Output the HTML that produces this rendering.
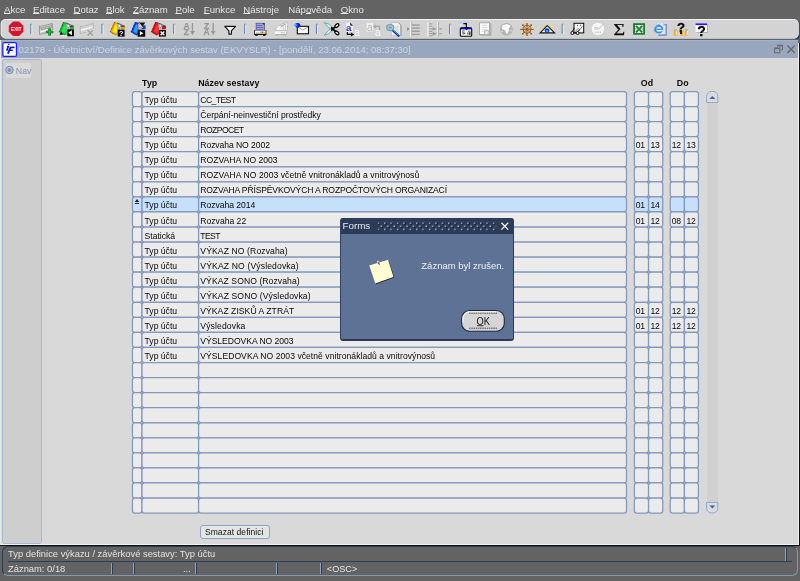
<!DOCTYPE html>
<html><head><meta charset="utf-8"><title>Forms</title>
<style>
*{box-sizing:border-box;margin:0;padding:0}
html,body{width:800px;height:581px;overflow:hidden;background:#636363;font-family:"Liberation Sans",sans-serif}
#root{position:relative;width:800px;height:581px;overflow:hidden;will-change:transform}
.abs{position:absolute}
/* menu */
#menu span{position:absolute;top:2.9px;font-size:9.6px;line-height:13px;color:#e6e6e6;white-space:nowrap}
#menu u{text-decoration:underline;text-underline-offset:0.4px;text-decoration-thickness:1px}
/* toolbar */
#tb{position:absolute;left:1px;top:19px;width:797px;height:20.5px;background:#d3d3d3;border-radius:9px 9px 9px 9px / 10px 10px 10px 10px;border-top:1px solid #eeeeee}
.sep{position:absolute;top:26px;width:1.6px;height:9px;background:#7f9ac4;border-radius:1px}
/* title bar */
#title{position:absolute;left:1px;top:41px;width:797px;height:17px;background:#98a7be}
#title .t{position:absolute;left:17.6px;top:3px;font-size:9.6px;line-height:12px;color:#cdd4df;white-space:nowrap;letter-spacing:-0.04px}
/* content */
#content{position:absolute;left:1px;top:58px;width:797px;height:486px;background:#d9d9d9}
#leftp{position:absolute;left:2px;top:59px;width:40px;height:485px;background:#cecece;border:1px solid #a9b8cf;border-radius:2.5px}
/* fields */
.f{position:absolute;border:1px solid transparent;font-size:8.6px;line-height:14.6px;padding-top:1px;color:#080808;white-space:nowrap;overflow:hidden;padding-left:2px}
.f.typ{padding-left:2.6px}
.f.nam{padding-left:1.3px}
.f.n{padding-left:0.7px;letter-spacing:-0.1px}
.f.n2{padding-left:1.4px}
.hdr{position:absolute;font-weight:bold;font-size:8.8px;letter-spacing:0.08px;line-height:12px;color:#0a0a0a;white-space:nowrap}
/* dialog */
#dlg{position:absolute;left:340px;top:218px;width:173.5px;height:122.6px;background:#5d7295;border-radius:3px 3px 3px 3px;border-right:1.5px solid #2b3a55;border-bottom:2px solid #2b3a55;border-left:1px solid #33435f;overflow:hidden}
#dlgt{position:absolute;left:0;top:0;width:100%;height:15.7px;background:#2b3b58}
/* status */
#status{position:absolute;left:2px;top:546px;width:796px;height:30px;border:1px solid;border-color:#2c3b57 #8797b0 #8797b0 #2c3b57;border-radius:6px}
.vs{position:absolute;top:563px;width:2px;height:11px;background:#2c3b57;border-left:1px solid #8ea2c2}
.st{position:absolute;font-size:9.4px;line-height:12px;color:#e2e2e2;white-space:nowrap}
</style></head><body>
<div id="root">
<!-- MENU -->
<div id="menu">
<span style="left:4px"><u>A</u>kce</span>
<span style="left:33px"><u>E</u>ditace</span>
<span style="left:73.5px"><u>D</u>otaz</span>
<span style="left:106px"><u>B</u>lok</span>
<span style="left:133px"><u>Z</u>áznam</span>
<span style="left:175.5px"><u>P</u>ole</span>
<span style="left:203.8px"><u>F</u>unkce</span>
<span style="left:243.3px"><u>N</u>ástroje</span>
<span style="left:288.3px">Náp<u>o</u>věda</span>
<span style="left:340.8px"><u>O</u>kno</span>
</div>
<!-- TOOLBAR -->
<svg class="abs" style="left:0;top:18px" width="800" height="24" viewBox="0 18 800 24">
<rect x="0.9" y="19.6" width="798.2" height="19.7" rx="5" fill="#55657f"/><rect x="795" y="20.4" width="4.6" height="18.6" rx="3" fill="#2c3b57"/><rect x="0.6" y="19" width="798.2" height="19.45" rx="5" fill="#f1f1f1"/><rect x="1.5" y="19.9" width="796.9" height="18.55" rx="4.4" fill="#d3d3d3"/>
<polygon points="13.05,21.50 19.05,21.50 23.30,25.75 23.30,31.75 19.05,36.00 13.05,36.00 8.80,31.75 8.80,25.75" fill="#d9112c"/>
<text x="16.1" y="30.5" font-family="Liberation Sans" font-weight="bold" font-size="4.9" fill="#fff" text-anchor="middle">EXIT</text>
<rect x="30.2" y="24" width="1.3" height="10" rx="0.5" fill="#6284c0"/><rect x="31.4" y="24.5" width="0.9" height="9.7" fill="#eaedf2"/><rect x="30.4" y="23.7" width="1.9" height="0.7" fill="#86a0cd"/>
<rect x="101.4" y="24" width="1.3" height="10" rx="0.5" fill="#6284c0"/><rect x="102.60000000000001" y="24.5" width="0.9" height="9.7" fill="#eaedf2"/><rect x="101.60000000000001" y="23.7" width="1.9" height="0.7" fill="#86a0cd"/>
<rect x="173.1" y="24" width="1.3" height="10" rx="0.5" fill="#6284c0"/><rect x="174.29999999999998" y="24.5" width="0.9" height="9.7" fill="#eaedf2"/><rect x="173.29999999999998" y="23.7" width="1.9" height="0.7" fill="#86a0cd"/>
<rect x="244.1" y="24" width="1.3" height="10" rx="0.5" fill="#6284c0"/><rect x="245.29999999999998" y="24.5" width="0.9" height="9.7" fill="#eaedf2"/><rect x="244.29999999999998" y="23.7" width="1.9" height="0.7" fill="#86a0cd"/>
<rect x="315.9" y="24" width="1.3" height="10" rx="0.5" fill="#6284c0"/><rect x="317.09999999999997" y="24.5" width="0.9" height="9.7" fill="#eaedf2"/><rect x="316.09999999999997" y="23.7" width="1.9" height="0.7" fill="#86a0cd"/>
<rect x="449" y="24" width="1.3" height="10" rx="0.5" fill="#6284c0"/><rect x="450.2" y="24.5" width="0.9" height="9.7" fill="#eaedf2"/><rect x="449.2" y="23.7" width="1.9" height="0.7" fill="#86a0cd"/>
<rect x="561.6" y="24" width="1.3" height="10" rx="0.5" fill="#6284c0"/><rect x="562.8000000000001" y="24.5" width="0.9" height="9.7" fill="#eaedf2"/><rect x="561.8000000000001" y="23.7" width="1.9" height="0.7" fill="#86a0cd"/>
<g fill="none" stroke="#8a8a8a" stroke-width="0.8"><path d="M39.5 25.6 V34.6 M39.5 26.6 L52.4 23.6 V30 M39.5 28.6 L52.4 25.4 M39.5 34.4 L46 33 M41 29.8 L52 27"/></g><path d="M40.2 31.4 L47.8 29 L47.8 30.4 L40.2 32.8 Z" fill="#fbfbfb"/><path d="M40.2 33 L45 31.6 V33 L40.2 34.2Z" fill="#bdbdbd"/>
<path d="M48.6 28.7 h1.9 v2.3 h2.3 v1.9 h-2.3 v2.3 h-1.9 v-2.3 h-2.3 v-1.9 h2.3 Z" fill="#00d21e" stroke="#0a6414" stroke-width="0.7"/>
<path d="M63.300000000000004 22.1 L66.3 22.4 L66.9 34.2 L64.9 35.3 L59.2 32 Z" fill="#0cb830"/><path d="M64.2 24.6 L65.8 24.4 L66.2 32.6 L64.4 33.6 L61.400000000000006 31.4 Z" fill="#22e652"/><path d="M63.6 22.2 L59.2 32 L64.9 35.3" stroke="#0a5a1c" stroke-width="0.9" stroke-dasharray="1 0.6" fill="none"/><path d="M66.2 23 L73.2 26.2" stroke="#5c5c5c" stroke-width="1.2" fill="none"/><path d="M70.0 26.8 L73.7 26.2 L73.9 28.9 L69.8 29.6 Z" fill="#0cb830"/><path d="M70.0 26.7 L73.8 26.1" stroke="#2a2a2a" stroke-width="0.9"/><circle cx="68.2" cy="26" r="1.5" fill="#ececec" stroke="#8c8c8c" stroke-width="0.8"/><path d="M68.2 27.4 V30" stroke="#8c8c8c" stroke-width="0.9"/><path d="M59.5 34.8 L61.400000000000006 31.6 L63.0 34.8 Z" fill="#111"/><rect x="61.2" y="35.4" width="6.5" height="1" fill="#f2f2f2"/>
<rect x="67.3" y="29.3" width="6.6" height="7" fill="#050505"/><path d="M68.2 32.8 L71.9 30.3 V35.3 Z" fill="#fff"/>
<g fill="none" stroke="#b4b4b4" stroke-width="0.8"><path d="M80.3 26 V33.5 M80.3 27 L93.4 23.4 V29 M80.3 33.6 L86 32.4"/></g><path d="M80.8 29.6 L92.6 26.2 V27.6 L80.8 31 Z" fill="#f6f6f6"/><path d="M87.6 30.2 L92.8 35.6 M92.8 30.2 L87.6 35.6" stroke="#a4a4a4" stroke-width="1.5" fill="none"/>
<path d="M114.3 22.1 L117.3 22.4 L117.9 34.2 L115.9 35.3 L110.2 32 Z" fill="#eaa000"/><path d="M115.2 24.6 L116.8 24.4 L117.2 32.6 L115.4 33.6 L112.4 31.4 Z" fill="#ffec00"/><path d="M114.60000000000001 22.2 L110.2 32 L115.9 35.3" stroke="#7a4a00" stroke-width="0.9" stroke-dasharray="1 0.6" fill="none"/><path d="M117.2 23 L124.2 26.2" stroke="#5c5c5c" stroke-width="1.2" fill="none"/><path d="M121.0 26.8 L124.7 26.2 L124.9 28.9 L120.8 29.6 Z" fill="#eaa000"/><path d="M121.0 26.7 L124.8 26.1" stroke="#2a2a2a" stroke-width="0.9"/><circle cx="119.2" cy="26" r="1.5" fill="#ececec" stroke="#8c8c8c" stroke-width="0.8"/><path d="M119.2 27.4 V30" stroke="#8c8c8c" stroke-width="0.9"/>
<rect x="117.7" y="29.6" width="6.9" height="7" fill="#050505"/><text x="121.2" y="35.8" font-family="Liberation Sans" font-weight="bold" font-size="7" fill="#fff" text-anchor="middle">?</text>
<path d="M135.1 22.1 L138.1 22.4 L138.7 34.2 L136.7 35.3 L131 32 Z" fill="#0a40f0"/><path d="M136 24.6 L137.6 24.4 L138 32.6 L136.2 33.6 L133.2 31.4 Z" fill="#20a8ff"/><path d="M135.4 22.2 L131 32 L136.7 35.3" stroke="#061a80" stroke-width="0.9" stroke-dasharray="1 0.6" fill="none"/><path d="M138 23 L145 26.2" stroke="#5c5c5c" stroke-width="1.2" fill="none"/><path d="M141.8 26.8 L145.5 26.2 L145.7 28.9 L141.6 29.6 Z" fill="#0a40f0"/><path d="M141.8 26.7 L145.6 26.1" stroke="#2a2a2a" stroke-width="0.9"/><circle cx="140" cy="26" r="1.5" fill="#ececec" stroke="#8c8c8c" stroke-width="0.8"/><path d="M140 27.4 V30" stroke="#8c8c8c" stroke-width="0.9"/>
<rect x="137.6" y="29.8" width="7.6" height="6.9" fill="#050505"/><path d="M139.8 31 L143.4 33.3 L139.8 35.6 Z" fill="#fff"/>
<path d="M138.6 22.4 H145.4 L142 26.8 Z" fill="#111"/><path d="M139.4 23.2 L142.6 27.8" stroke="#e8e8e8" stroke-width="0.9"/>
<path d="M155.4 22.1 L158.4 22.4 L159.0 34.2 L157.0 35.3 L151.3 32 Z" fill="#d80c14"/><path d="M156.3 24.6 L157.9 24.4 L158.3 32.6 L156.5 33.6 L153.5 31.4 Z" fill="#ff3030"/><path d="M155.70000000000002 22.2 L151.3 32 L157.0 35.3" stroke="#6a0606" stroke-width="0.9" stroke-dasharray="1 0.6" fill="none"/><path d="M158.3 23 L165.3 26.2" stroke="#5c5c5c" stroke-width="1.2" fill="none"/><path d="M162.10000000000002 26.8 L165.8 26.2 L166.0 28.9 L161.9 29.6 Z" fill="#d80c14"/><path d="M162.10000000000002 26.7 L165.9 26.1" stroke="#2a2a2a" stroke-width="0.9"/><circle cx="160.3" cy="26" r="1.5" fill="#ececec" stroke="#8c8c8c" stroke-width="0.8"/><path d="M160.3 27.4 V30" stroke="#8c8c8c" stroke-width="0.9"/>
<rect x="159" y="30" width="6.9" height="6.6" fill="#050505"/><path d="M160.6 31.4 L164.4 35.2 M164.4 31.4 L160.6 35.2" stroke="#fff" stroke-width="1.4"/>
<g font-family="Liberation Sans" font-weight="bold" font-size="8.6" fill="#989898" stroke="#989898" stroke-width="0.25"><text x="183.5" y="28.9">A</text><text x="183.8" y="35">Z</text></g>
<path d="M192.4 23 V32.6" stroke="#989898" stroke-width="1.35"/><path d="M190 31 H194.8 L192.4 35.3 Z" fill="#989898"/>
<g font-family="Liberation Sans" font-weight="bold" font-size="8.6" fill="#989898" stroke="#989898" stroke-width="0.25"><text x="203.9" y="28.9">Z</text><text x="203.6" y="35.1">A</text></g>
<path d="M213.2 23 V32.6" stroke="#989898" stroke-width="1.35"/><path d="M210.8 31 H215.6 L213.2 35.3 Z" fill="#989898"/>
<path d="M224.8 26.4 H235.5 L231.4 30.8 V34.2 H228.9 V30.8 Z" fill="#fafafa" stroke="#151515" stroke-width="1.2" stroke-linejoin="round"/>
<rect x="255.8" y="22.9" width="8.9" height="7.6" fill="#3a3a46"/><rect x="254.2" y="30" width="12.2" height="4.8" fill="#1a1a1a"/><rect x="256.4" y="23.4" width="7.7" height="7" fill="#9a9fe2"/><path d="M262.4 23.2 L264.3 25.2 V23.2Z" fill="#222"/><rect x="256.8" y="25" width="5.6" height="0.8" fill="#5a60c0"/><rect x="256.8" y="27.2" width="6.6" height="0.8" fill="#5a60c0"/><rect x="256.8" y="29" width="6.6" height="0.8" fill="#6a6ac8"/><rect x="255" y="30.6" width="10.6" height="3.3" fill="#fbfbfb"/><rect x="254.6" y="30" width="11.4" height="0.7" fill="#9a9a9a"/><rect x="254.5" y="33.8" width="11.6" height="1.2" fill="#111"/><rect x="255.2" y="34.8" width="2.4" height="1.1" fill="#111"/><rect x="263" y="34.8" width="2.4" height="1.1" fill="#111"/><rect x="260.2" y="31.6" width="1.5" height="1.2" fill="#18c030"/><rect x="261.8" y="31.6" width="1.5" height="1.2" fill="#e02020"/><rect x="263.4" y="31.6" width="1.5" height="1.2" fill="#f0d000"/><rect x="256" y="31.9" width="3.4" height="0.7" fill="#b0b0b0"/>
<g fill="#f7f7f7" stroke="#b6b6b6" stroke-width="0.7"><path d="M281.8 30.4 Q282.2 22.7 286.2 22.7 L287.5 22.9 V30.4 Z"/><path d="M278.8 30.4 Q279 24 284 23.8 L285.5 24 V30.4 Z"/><path d="M275.8 30.4 Q276 25.6 281 25.4 L283.2 25.6 V30.4 Z"/></g><path d="M280.4 27.2 L283.2 25.6 M283 25.6 L285.4 24" stroke="#9a9a9a" stroke-width="0.8"/><rect x="275" y="31.4" width="11.8" height="2.8" fill="#f8f8f8"/><rect x="275" y="34" width="11.8" height="1.1" fill="#b4b4b4"/><rect x="286.2" y="31.4" width="0.9" height="3.6" fill="#b4b4b4"/><rect x="275.8" y="35" width="2.4" height="1" fill="#bcbcbc"/><rect x="283.6" y="35" width="2.4" height="1" fill="#bcbcbc"/><rect x="280.6" y="32.5" width="4.6" height="0.8" fill="#b0b0b0"/>
<rect x="297.3" y="26.3" width="11.2" height="7.5" fill="#fcfcfc" stroke="#0c0c0c" stroke-width="1.1"/><path d="M298.6 27.4 L302.8 30 L308 27" stroke="#8a8a8a" stroke-width="0.8" fill="none"/><path d="M294.4 25.4 a3 2.6 0 1 1 5.6 1.4 l-2.6 1.4 Z" fill="#0a1ee6"/><circle cx="295.6" cy="25.2" r="1.3" fill="#1fd0ff"/>
<path d="M324.3 22.5 Q329 23.2 332.8 28 L331.2 29.5 Q327.4 26.8 324.3 22.5 Z" fill="#f0f8f8" stroke="#48a4a4" stroke-width="0.9" stroke-linejoin="round"/><path d="M324.3 35.3 Q329 34.6 332.8 29.8 L331.2 28.3 Q327.4 31 324.3 35.3 Z" fill="#f0f8f8" stroke="#48a4a4" stroke-width="0.9" stroke-linejoin="round"/><path d="M331.6 30.2 L335.2 26.9 M331.6 27.6 L335.2 31.4" stroke="#060606" stroke-width="1.7" stroke-linecap="round"/><ellipse cx="336.9" cy="25.6" rx="2.3" ry="1.4" transform="rotate(-38 336.9 25.6)" fill="#f4f4f4" stroke="#060606" stroke-width="1.3"/><ellipse cx="336.9" cy="32.9" rx="2.3" ry="1.4" transform="rotate(38 336.9 32.9)" fill="#f4f4f4" stroke="#060606" stroke-width="1.3"/>
<path d="M346.4 22.8 H350.4 L352.8 25.2 V31.8 H346.4 Z" fill="#f8f8f8"/><path d="M350.2 22.4 L353.2 25.8 L350.2 25.6Z" fill="#222"/><text x="346.1" y="31" font-family="Liberation Sans" font-weight="bold" font-size="9.8" fill="#2c2cf2">a</text><path d="M347.4 32 V34.4 H351.6" stroke="#0a0a0a" stroke-width="1.2" fill="none"/><path d="M351 32.4 L354.4 34.4 L351 36.4 Z" fill="#0a0a0a"/><text x="354.3" y="35.6" font-family="Liberation Sans" font-size="10" fill="#fafafa">a</text>
<rect x="366.6" y="22.8" width="6.6" height="8.6" fill="#f1f1f1"/><text x="366.9" y="30.6" font-family="Liberation Sans" font-size="10" fill="#b4b4b4">a</text><path d="M379.6 30.4 V26.4 H375" stroke="#a8a8a8" stroke-width="1.2" fill="none"/><path d="M375.8 24.2 L372.8 26.4 L375.8 28.6Z" fill="#a8a8a8"/><text x="375" y="36.2" font-family="Liberation Sans" font-size="10.4" fill="#f6f6f6">a</text>
<path d="M391.2 22.6 H398.6 L400.8 24.8 V35.8 H391.2 Z" fill="#f3f3f3" stroke="#b4b4b4" stroke-width="0.7"/><path d="M398.4 22.6 L401 25.2 V35.8" stroke="#8a8a8a" stroke-width="0.8" fill="none"/><rect x="394.4" y="25.4" width="4.8" height="9" fill="#e2e4dc"/><path d="M392.6 30.2 L398.6 35.8" stroke="#0c28c8" stroke-width="2.2" stroke-linecap="round"/><path d="M393.6 30.6 L398.4 35" stroke="#1fc4ff" stroke-width="0.9" stroke-linecap="round"/><ellipse cx="390.2" cy="27.6" rx="3.5" ry="3.1" fill="#b9c9cc" stroke="#5fa3b8" stroke-width="1.2"/><ellipse cx="390.2" cy="27.4" rx="1.8" ry="1.2" fill="#8e9a96"/>
<rect x="410.2" y="22.2" width="0.9" height="14.4" fill="#fafafa"/><rect x="411" y="22.2" width="0.7" height="14.4" fill="#b0b0b0"/><g fill="#9c9c9c"><rect x="412" y="24.3" width="7.8" height="1.35"/><rect x="412" y="27.4" width="7.8" height="1.35"/><rect x="412" y="30.6" width="7.8" height="1.35"/><rect x="412" y="33.7" width="7.8" height="1.35"/></g><path d="M407 27.2 L410 29.1 L407 31Z" fill="#969696"/>
<rect x="427.5" y="22.2" width="0.9" height="14.4" fill="#fafafa"/><rect x="437.4" y="22.2" width="0.9" height="14.4" fill="#fafafa"/><rect x="438.2" y="22.2" width="0.7" height="14.4" fill="#9c9c9c"/><g fill="#989898"><rect x="429" y="23.4" width="3.4" height="0.9"/><rect x="429" y="25.6" width="3.4" height="0.9"/><rect x="429" y="28.4" width="3.6" height="0.9"/><rect x="429" y="30.8" width="3.4" height="0.9"/><rect x="429" y="33.2" width="3.6" height="0.9"/><rect x="429" y="35.4" width="3.4" height="0.9"/><path d="M432.6 27.2 L437 28.9 L432.6 30.6Z"/><path d="M432.6 32 L437 33.7 L432.6 35.4Z"/><rect x="439" y="28.4" width="3" height="1"/><rect x="439" y="33.2" width="3" height="1"/></g>
<rect x="458.2" y="22" width="11" height="0.8" fill="#a9cdee"/><rect x="459.6" y="24.4" width="2.2" height="1.6" fill="#f6f0c0"/><rect x="458.2" y="25.2" width="1.2" height="1" fill="#f6d6d6"/><rect x="460.3" y="27.8" width="11.4" height="8.4" rx="1" fill="#f4f4f4" stroke="#0c0c0c" stroke-width="1.1"/><rect x="460.6" y="27.6" width="10.8" height="1.8" fill="#0a0ae0"/><path d="M463.4 23.7 H466.4 V28" stroke="#0a0a0a" stroke-width="1.2" fill="none"/><path d="M464 27.2 H468.8 L466.4 30.6Z" fill="#0a0a0a"/><g fill="#3a3a3a"><rect x="462" y="30.6" width="2.6" height="0.8"/><rect x="462.6" y="32" width="1" height="2.4"/><rect x="464.2" y="32.6" width="1" height="1.4"/><rect x="468" y="30.8" width="2.4" height="0.8"/><rect x="467.4" y="32.4" width="1" height="2.2"/><rect x="469" y="32.2" width="1.6" height="2.6"/></g>
<rect x="480.4" y="23.4" width="11.2" height="12.4" fill="#b4b4b4"/><rect x="479.4" y="22.8" width="10.2" height="11.8" fill="#fafafa" stroke="#9a9a9a" stroke-width="0.8"/><g fill="#d4d4d4"><rect x="481.8" y="24.8" width="5.6" height="0.8"/><rect x="481.8" y="27" width="5.6" height="0.8"/><rect x="481.8" y="29.2" width="5.6" height="0.8"/><rect x="481.8" y="31.2" width="2" height="0.8"/></g><rect x="484.6" y="30.8" width="4.4" height="3.6" fill="#e6e6e6" stroke="#adadad" stroke-width="0.8"/>
<circle cx="506.4" cy="29.3" r="6.3" fill="#b2b2b2"/><path d="M503 25 L507 24 L510.4 25.6 L510 27.4 L508.6 28 L509.4 30 L507.6 33.6 L506 33.8 L505.4 30.6 L502.4 29.6 L501.6 27.2 Z" fill="#f8f8f8"/><path d="M510.6 29 L511.8 30.6 L510.6 32.4Z" fill="#ededed"/><rect x="501.4" y="31" width="1.6" height="0.9" fill="#e4e4e4"/>
<g stroke="#9a5204" fill="none"><circle cx="527" cy="29.4" r="4" stroke-width="0.95"/><path d="M520.2 29.4 H533.6" stroke-width="1"/><path d="M527 23.6 V35.2 M522.8 25.2 L531.2 33.6 M531.2 25.2 L522.8 33.6" stroke-width="0.85"/></g><circle cx="527" cy="29.4" r="1.35" fill="#b25c04"/><circle cx="527" cy="29.4" r="2.2" fill="none" stroke="#c89858" stroke-width="0.5"/><g fill="#8a4802"><rect x="522.1" y="24.4" width="1.5" height="1.4"/><rect x="530.4" y="24.4" width="1.5" height="1.4"/><rect x="522.1" y="33.1" width="1.5" height="1.4"/><rect x="530.4" y="33.1" width="1.5" height="1.4"/><rect x="526.3" y="23.2" width="1.4" height="1.2"/><rect x="526.3" y="34.5" width="1.4" height="1.2"/></g>
<path d="M547.3 25.6 L554.6 32.9 H540.2 Z" fill="#f6f6f6" stroke="#111" stroke-width="1.1" stroke-linejoin="miter"/><circle cx="547" cy="30.5" r="2.3" fill="#1424f4"/><circle cx="547" cy="31" r="1.1" fill="#22d2ff"/><g stroke="#f6e23a" stroke-width="1.1"><path d="M540.9 28.7 L539.3 28.0 M542.3 26.9 L541.0 25.9 M544.2 25.7 L543.5 24.4 M547.2 25.2 L547.2 23.7 M550.2 25.7 L550.9 24.4 M552.1 26.9 L553.4 25.9 M553.5 28.7 L555.1 28.0"/></g>
<rect x="574" y="23.3" width="9.7" height="9.6" fill="#f4f4f4" stroke="#0c0c0c" stroke-width="1"/><path d="M575.4 31.6 L578 28.4 L579.6 30 L582.6 26" stroke="#777" stroke-width="0.9" fill="none"/><rect x="577" y="25" width="1" height="1" fill="#555"/><rect x="580" y="24.8" width="1" height="1" fill="#555"/><path d="M572.2 31.6 L574.4 28 M577.6 31.6 L580 29.6" stroke="#0c0c0c" stroke-width="0.9"/><rect x="573" y="32.4" width="4" height="0.9" fill="#0c0c0c"/><circle cx="572.4" cy="33" r="1.5" fill="#f4f4f4" stroke="#0c0c0c" stroke-width="1"/><circle cx="577.6" cy="33" r="1.5" fill="#f4f4f4" stroke="#0c0c0c" stroke-width="1"/>
<circle cx="597.9" cy="28.9" r="6.2" fill="#f7f7f7"/><path d="M594.4 29 H598.4 L602.6 25.2" stroke="#b8b8b8" stroke-width="1" fill="none"/><g fill="#c4c4c4"><rect x="594.6" y="31.4" width="1" height="1.6"/><rect x="596.4" y="31.4" width="1" height="1.6"/><rect x="598.2" y="31.4" width="1" height="1.6"/><rect x="600" y="31.4" width="1" height="1.6"/><rect x="594" y="27" width="4" height="0.8"/></g>
<text x="613.5" y="34.8" font-family="Liberation Serif" font-size="16.6" fill="#0a0a0a" stroke="#0a0a0a" stroke-width="0.25" textLength="11.6" lengthAdjust="spacingAndGlyphs">Σ</text>
<rect x="633.1" y="23.2" width="11.9" height="11.5" fill="#1f7d33"/><rect x="635" y="25" width="8.2" height="8" fill="#dcebdd"/><path d="M636 25.8 L642.2 32.4 M642.2 25.8 L636 32.4" stroke="#1f7d33" stroke-width="1.7"/><rect x="635" y="28.6" width="8.2" height="0.6" fill="#5a9a66"/>
<rect x="658.2" y="24" width="8.4" height="11.6" fill="#5e66b8"/><path d="M657.2 23 H663.6 L665.6 25 V34.6 H657.2 Z" fill="#dce8fb"/><path d="M663.4 23 L665.8 25.4 H663.4Z" fill="#8fa6d8"/><ellipse cx="658.8" cy="29.3" rx="3.6" ry="3.4" fill="none" stroke="#2f8ee6" stroke-width="1.7"/><rect x="656.4" y="28.7" width="6.2" height="1.2" fill="#2f8ee6"/><rect x="660.6" y="29.9" width="2.6" height="1.3" fill="#dce8fb"/><path d="M654.2 31.6 Q653.6 25.8 660.4 23.8" stroke="#55a8f0" stroke-width="0.8" fill="none"/>
<g fill="#f6a92c"><rect x="673.8" y="30.4" width="3.6" height="5.2"/><rect x="679" y="30.4" width="4" height="5.2"/><rect x="684.8" y="30.4" width="3.2" height="5.2"/></g><g fill="#fbe9a2"><rect x="675.8" y="30.6" width="1.4" height="4.6"/><rect x="679.2" y="30.6" width="1.2" height="4.6"/><rect x="686.6" y="30.6" width="1.4" height="4.6"/></g><g fill="#9a9a9a"><rect x="674" y="29.4" width="2.6" height="0.9"/><rect x="685" y="29.4" width="2.6" height="0.9"/></g><text x="681" y="32" font-family="Liberation Sans" font-weight="bold" font-size="13.2" fill="#050505" stroke="#050505" stroke-width="0.3" text-anchor="middle">?</text><rect x="680" y="32.2" width="2" height="1.7" fill="#050505"/>
<rect x="696.6" y="24.6" width="11.2" height="8.4" fill="#a2a2a2"/><rect x="695.6" y="23.6" width="11.4" height="8.6" fill="#fbfbfb"/><rect x="695.6" y="23.4" width="11.4" height="1.7" fill="#2a12f0"/><text x="701.5" y="35.9" font-family="Liberation Sans" font-weight="bold" font-size="14" fill="#050505" stroke="#050505" stroke-width="0.3" text-anchor="middle">?</text>
</svg>
<!-- TITLE -->
<div class="abs" style="left:1px;top:40px;width:797px;height:2px;background:#a6b2c5"></div>
<div id="title"><svg class="abs" style="left:0;top:0" width="20" height="17" viewBox="1 41 20 17"><rect x="2.85" y="42.6" width="13.6" height="13.7" rx="1.4" fill="#fdfdfd" stroke="#1c1cff" stroke-width="1.25"/><g stroke="#0a0ad8" fill="none"><path d="M8.5 46.1 L6.7 50.6" stroke-width="1.6"/><path d="M6.9 46.4 H9" stroke-width="1"/><path d="M10.7 47 L7.9 53.7" stroke-width="1.8"/><path d="M10.2 47.4 H14.5" stroke-width="1.6"/><path d="M9.2 50.3 H12.8" stroke-width="1.4"/></g><circle cx="8.8" cy="44.6" r="0.75" fill="#0a0ad8"/></svg><div class="t">02178 - Účetnictví/Definice závěrkových sestav (EKVYSLR) - [pondělí, 23.06.2014; 08:37:30]</div></div>
<svg class="abs" style="left:770px;top:42px" width="28" height="14" viewBox="770 42 28 14"><g fill="none" stroke="#6b6b6b"><path d="M777.3 45.7 H782.5 V50 H780.4" stroke-width="1"/><path d="M777 45.6 H782.9" stroke-width="1.6"/><rect x="774.6" y="48.4" width="5.2" height="4.4" stroke-width="1"/><path d="M774.2 48.3 H780.2" stroke-width="1.6"/><path d="M787.4 45.5 L794.8 52.9 M794.8 45.5 L787.4 52.9" stroke-width="1.45"/></g></svg>
<!-- CONTENT -->
<div id="content"></div>
<div id="leftp"></div>
<div class="abs" style="left:5.5px;top:63px;width:25.5px;height:15px;background:#dadada"></div>
<svg class="abs" style="left:4px;top:64px" width="12" height="12" viewBox="4 64 12 12"><circle cx="9.5" cy="70" r="3.7" fill="#c3cad7" stroke="#7487aa" stroke-width="1"/><circle cx="9.5" cy="70" r="2.1" fill="#8495b4"/></svg>
<div class="abs" style="left:15.8px;top:64.5px;font-size:8.8px;line-height:12px;color:#8797b2">Nav</div>
<div class="hdr" style="left:142.1px;top:77px">Typ</div>
<div class="hdr" style="left:198.2px;top:77px">Název sestavy</div>
<div class="hdr" style="left:640.8px;top:77px">Od</div>
<div class="hdr" style="left:676.8px;top:77px">Do</div>
<svg class="abs" style="left:130px;top:89px" width="572" height="427" viewBox="130 89 572 427"><g stroke="#8498bb" stroke-width="1.25"><rect x="132.45" y="91.50" width="9.55" height="15.06" rx="2.4" fill="#ebebeb"/><rect x="142.00" y="91.50" width="56.60" height="15.06" rx="2.4" fill="#ebebeb"/><rect x="198.60" y="91.50" width="427.90" height="15.06" rx="2.4" fill="#ebebeb"/><rect x="634.35" y="91.50" width="14.20" height="15.06" rx="2.4" fill="#ebebeb"/><rect x="648.55" y="91.50" width="14.25" height="15.06" rx="2.4" fill="#ebebeb"/><rect x="670.20" y="91.50" width="14.20" height="15.06" rx="2.4" fill="#ebebeb"/><rect x="684.40" y="91.50" width="14.05" height="15.06" rx="2.4" fill="#ebebeb"/><rect x="132.45" y="106.56" width="9.55" height="15.06" rx="2.4" fill="#ebebeb"/><rect x="142.00" y="106.56" width="56.60" height="15.06" rx="2.4" fill="#ebebeb"/><rect x="198.60" y="106.56" width="427.90" height="15.06" rx="2.4" fill="#ebebeb"/><rect x="634.35" y="106.56" width="14.20" height="15.06" rx="2.4" fill="#ebebeb"/><rect x="648.55" y="106.56" width="14.25" height="15.06" rx="2.4" fill="#ebebeb"/><rect x="670.20" y="106.56" width="14.20" height="15.06" rx="2.4" fill="#ebebeb"/><rect x="684.40" y="106.56" width="14.05" height="15.06" rx="2.4" fill="#ebebeb"/><rect x="132.45" y="121.61" width="9.55" height="15.06" rx="2.4" fill="#ebebeb"/><rect x="142.00" y="121.61" width="56.60" height="15.06" rx="2.4" fill="#ebebeb"/><rect x="198.60" y="121.61" width="427.90" height="15.06" rx="2.4" fill="#ebebeb"/><rect x="634.35" y="121.61" width="14.20" height="15.06" rx="2.4" fill="#ebebeb"/><rect x="648.55" y="121.61" width="14.25" height="15.06" rx="2.4" fill="#ebebeb"/><rect x="670.20" y="121.61" width="14.20" height="15.06" rx="2.4" fill="#ebebeb"/><rect x="684.40" y="121.61" width="14.05" height="15.06" rx="2.4" fill="#ebebeb"/><rect x="132.45" y="136.67" width="9.55" height="15.06" rx="2.4" fill="#ebebeb"/><rect x="142.00" y="136.67" width="56.60" height="15.06" rx="2.4" fill="#ebebeb"/><rect x="198.60" y="136.67" width="427.90" height="15.06" rx="2.4" fill="#ebebeb"/><rect x="634.35" y="136.67" width="14.20" height="15.06" rx="2.4" fill="#ebebeb"/><rect x="648.55" y="136.67" width="14.25" height="15.06" rx="2.4" fill="#ebebeb"/><rect x="670.20" y="136.67" width="14.20" height="15.06" rx="2.4" fill="#ebebeb"/><rect x="684.40" y="136.67" width="14.05" height="15.06" rx="2.4" fill="#ebebeb"/><rect x="132.45" y="151.73" width="9.55" height="15.06" rx="2.4" fill="#ebebeb"/><rect x="142.00" y="151.73" width="56.60" height="15.06" rx="2.4" fill="#ebebeb"/><rect x="198.60" y="151.73" width="427.90" height="15.06" rx="2.4" fill="#ebebeb"/><rect x="634.35" y="151.73" width="14.20" height="15.06" rx="2.4" fill="#ebebeb"/><rect x="648.55" y="151.73" width="14.25" height="15.06" rx="2.4" fill="#ebebeb"/><rect x="670.20" y="151.73" width="14.20" height="15.06" rx="2.4" fill="#ebebeb"/><rect x="684.40" y="151.73" width="14.05" height="15.06" rx="2.4" fill="#ebebeb"/><rect x="132.45" y="166.78" width="9.55" height="15.06" rx="2.4" fill="#ebebeb"/><rect x="142.00" y="166.78" width="56.60" height="15.06" rx="2.4" fill="#ebebeb"/><rect x="198.60" y="166.78" width="427.90" height="15.06" rx="2.4" fill="#ebebeb"/><rect x="634.35" y="166.78" width="14.20" height="15.06" rx="2.4" fill="#ebebeb"/><rect x="648.55" y="166.78" width="14.25" height="15.06" rx="2.4" fill="#ebebeb"/><rect x="670.20" y="166.78" width="14.20" height="15.06" rx="2.4" fill="#ebebeb"/><rect x="684.40" y="166.78" width="14.05" height="15.06" rx="2.4" fill="#ebebeb"/><rect x="132.45" y="181.84" width="9.55" height="15.06" rx="2.4" fill="#ebebeb"/><rect x="142.00" y="181.84" width="56.60" height="15.06" rx="2.4" fill="#ebebeb"/><rect x="198.60" y="181.84" width="427.90" height="15.06" rx="2.4" fill="#ebebeb"/><rect x="634.35" y="181.84" width="14.20" height="15.06" rx="2.4" fill="#ebebeb"/><rect x="648.55" y="181.84" width="14.25" height="15.06" rx="2.4" fill="#ebebeb"/><rect x="670.20" y="181.84" width="14.20" height="15.06" rx="2.4" fill="#ebebeb"/><rect x="684.40" y="181.84" width="14.05" height="15.06" rx="2.4" fill="#ebebeb"/><rect x="132.45" y="196.90" width="9.55" height="15.06" rx="2.4" fill="#c6e0fb"/><rect x="142.00" y="196.90" width="56.60" height="15.06" rx="2.4" fill="#c6e0fb"/><rect x="198.60" y="196.90" width="427.90" height="15.06" rx="2.4" fill="#c6e0fb"/><rect x="634.35" y="196.90" width="14.20" height="15.06" rx="2.4" fill="#c6e0fb"/><rect x="648.55" y="196.90" width="14.25" height="15.06" rx="2.4" fill="#c6e0fb"/><rect x="670.20" y="196.90" width="14.20" height="15.06" rx="2.4" fill="#c6e0fb"/><rect x="684.40" y="196.90" width="14.05" height="15.06" rx="2.4" fill="#c6e0fb"/><rect x="132.45" y="211.96" width="9.55" height="15.06" rx="2.4" fill="#ebebeb"/><rect x="142.00" y="211.96" width="56.60" height="15.06" rx="2.4" fill="#ebebeb"/><rect x="198.60" y="211.96" width="427.90" height="15.06" rx="2.4" fill="#ebebeb"/><rect x="634.35" y="211.96" width="14.20" height="15.06" rx="2.4" fill="#ebebeb"/><rect x="648.55" y="211.96" width="14.25" height="15.06" rx="2.4" fill="#ebebeb"/><rect x="670.20" y="211.96" width="14.20" height="15.06" rx="2.4" fill="#ebebeb"/><rect x="684.40" y="211.96" width="14.05" height="15.06" rx="2.4" fill="#ebebeb"/><rect x="132.45" y="227.01" width="9.55" height="15.06" rx="2.4" fill="#ebebeb"/><rect x="142.00" y="227.01" width="56.60" height="15.06" rx="2.4" fill="#ebebeb"/><rect x="198.60" y="227.01" width="427.90" height="15.06" rx="2.4" fill="#ebebeb"/><rect x="634.35" y="227.01" width="14.20" height="15.06" rx="2.4" fill="#ebebeb"/><rect x="648.55" y="227.01" width="14.25" height="15.06" rx="2.4" fill="#ebebeb"/><rect x="670.20" y="227.01" width="14.20" height="15.06" rx="2.4" fill="#ebebeb"/><rect x="684.40" y="227.01" width="14.05" height="15.06" rx="2.4" fill="#ebebeb"/><rect x="132.45" y="242.07" width="9.55" height="15.06" rx="2.4" fill="#ebebeb"/><rect x="142.00" y="242.07" width="56.60" height="15.06" rx="2.4" fill="#ebebeb"/><rect x="198.60" y="242.07" width="427.90" height="15.06" rx="2.4" fill="#ebebeb"/><rect x="634.35" y="242.07" width="14.20" height="15.06" rx="2.4" fill="#ebebeb"/><rect x="648.55" y="242.07" width="14.25" height="15.06" rx="2.4" fill="#ebebeb"/><rect x="670.20" y="242.07" width="14.20" height="15.06" rx="2.4" fill="#ebebeb"/><rect x="684.40" y="242.07" width="14.05" height="15.06" rx="2.4" fill="#ebebeb"/><rect x="132.45" y="257.13" width="9.55" height="15.06" rx="2.4" fill="#ebebeb"/><rect x="142.00" y="257.13" width="56.60" height="15.06" rx="2.4" fill="#ebebeb"/><rect x="198.60" y="257.13" width="427.90" height="15.06" rx="2.4" fill="#ebebeb"/><rect x="634.35" y="257.13" width="14.20" height="15.06" rx="2.4" fill="#ebebeb"/><rect x="648.55" y="257.13" width="14.25" height="15.06" rx="2.4" fill="#ebebeb"/><rect x="670.20" y="257.13" width="14.20" height="15.06" rx="2.4" fill="#ebebeb"/><rect x="684.40" y="257.13" width="14.05" height="15.06" rx="2.4" fill="#ebebeb"/><rect x="132.45" y="272.18" width="9.55" height="15.06" rx="2.4" fill="#ebebeb"/><rect x="142.00" y="272.18" width="56.60" height="15.06" rx="2.4" fill="#ebebeb"/><rect x="198.60" y="272.18" width="427.90" height="15.06" rx="2.4" fill="#ebebeb"/><rect x="634.35" y="272.18" width="14.20" height="15.06" rx="2.4" fill="#ebebeb"/><rect x="648.55" y="272.18" width="14.25" height="15.06" rx="2.4" fill="#ebebeb"/><rect x="670.20" y="272.18" width="14.20" height="15.06" rx="2.4" fill="#ebebeb"/><rect x="684.40" y="272.18" width="14.05" height="15.06" rx="2.4" fill="#ebebeb"/><rect x="132.45" y="287.24" width="9.55" height="15.06" rx="2.4" fill="#ebebeb"/><rect x="142.00" y="287.24" width="56.60" height="15.06" rx="2.4" fill="#ebebeb"/><rect x="198.60" y="287.24" width="427.90" height="15.06" rx="2.4" fill="#ebebeb"/><rect x="634.35" y="287.24" width="14.20" height="15.06" rx="2.4" fill="#ebebeb"/><rect x="648.55" y="287.24" width="14.25" height="15.06" rx="2.4" fill="#ebebeb"/><rect x="670.20" y="287.24" width="14.20" height="15.06" rx="2.4" fill="#ebebeb"/><rect x="684.40" y="287.24" width="14.05" height="15.06" rx="2.4" fill="#ebebeb"/><rect x="132.45" y="302.30" width="9.55" height="15.06" rx="2.4" fill="#ebebeb"/><rect x="142.00" y="302.30" width="56.60" height="15.06" rx="2.4" fill="#ebebeb"/><rect x="198.60" y="302.30" width="427.90" height="15.06" rx="2.4" fill="#ebebeb"/><rect x="634.35" y="302.30" width="14.20" height="15.06" rx="2.4" fill="#ebebeb"/><rect x="648.55" y="302.30" width="14.25" height="15.06" rx="2.4" fill="#ebebeb"/><rect x="670.20" y="302.30" width="14.20" height="15.06" rx="2.4" fill="#ebebeb"/><rect x="684.40" y="302.30" width="14.05" height="15.06" rx="2.4" fill="#ebebeb"/><rect x="132.45" y="317.36" width="9.55" height="15.06" rx="2.4" fill="#ebebeb"/><rect x="142.00" y="317.36" width="56.60" height="15.06" rx="2.4" fill="#ebebeb"/><rect x="198.60" y="317.36" width="427.90" height="15.06" rx="2.4" fill="#ebebeb"/><rect x="634.35" y="317.36" width="14.20" height="15.06" rx="2.4" fill="#ebebeb"/><rect x="648.55" y="317.36" width="14.25" height="15.06" rx="2.4" fill="#ebebeb"/><rect x="670.20" y="317.36" width="14.20" height="15.06" rx="2.4" fill="#ebebeb"/><rect x="684.40" y="317.36" width="14.05" height="15.06" rx="2.4" fill="#ebebeb"/><rect x="132.45" y="332.41" width="9.55" height="15.06" rx="2.4" fill="#ebebeb"/><rect x="142.00" y="332.41" width="56.60" height="15.06" rx="2.4" fill="#ebebeb"/><rect x="198.60" y="332.41" width="427.90" height="15.06" rx="2.4" fill="#ebebeb"/><rect x="634.35" y="332.41" width="14.20" height="15.06" rx="2.4" fill="#ebebeb"/><rect x="648.55" y="332.41" width="14.25" height="15.06" rx="2.4" fill="#ebebeb"/><rect x="670.20" y="332.41" width="14.20" height="15.06" rx="2.4" fill="#ebebeb"/><rect x="684.40" y="332.41" width="14.05" height="15.06" rx="2.4" fill="#ebebeb"/><rect x="132.45" y="347.47" width="9.55" height="15.06" rx="2.4" fill="#ebebeb"/><rect x="142.00" y="347.47" width="56.60" height="15.06" rx="2.4" fill="#ebebeb"/><rect x="198.60" y="347.47" width="427.90" height="15.06" rx="2.4" fill="#ebebeb"/><rect x="634.35" y="347.47" width="14.20" height="15.06" rx="2.4" fill="#ebebeb"/><rect x="648.55" y="347.47" width="14.25" height="15.06" rx="2.4" fill="#ebebeb"/><rect x="670.20" y="347.47" width="14.20" height="15.06" rx="2.4" fill="#ebebeb"/><rect x="684.40" y="347.47" width="14.05" height="15.06" rx="2.4" fill="#ebebeb"/><rect x="132.45" y="362.53" width="9.55" height="15.06" rx="2.4" fill="#ebebeb"/><rect x="142.00" y="362.53" width="56.60" height="15.06" rx="2.4" fill="#ebebeb"/><rect x="198.60" y="362.53" width="427.90" height="15.06" rx="2.4" fill="#ebebeb"/><rect x="634.35" y="362.53" width="14.20" height="15.06" rx="2.4" fill="#ebebeb"/><rect x="648.55" y="362.53" width="14.25" height="15.06" rx="2.4" fill="#ebebeb"/><rect x="670.20" y="362.53" width="14.20" height="15.06" rx="2.4" fill="#ebebeb"/><rect x="684.40" y="362.53" width="14.05" height="15.06" rx="2.4" fill="#ebebeb"/><rect x="132.45" y="377.58" width="9.55" height="15.06" rx="2.4" fill="#ebebeb"/><rect x="142.00" y="377.58" width="56.60" height="15.06" rx="2.4" fill="#ebebeb"/><rect x="198.60" y="377.58" width="427.90" height="15.06" rx="2.4" fill="#ebebeb"/><rect x="634.35" y="377.58" width="14.20" height="15.06" rx="2.4" fill="#ebebeb"/><rect x="648.55" y="377.58" width="14.25" height="15.06" rx="2.4" fill="#ebebeb"/><rect x="670.20" y="377.58" width="14.20" height="15.06" rx="2.4" fill="#ebebeb"/><rect x="684.40" y="377.58" width="14.05" height="15.06" rx="2.4" fill="#ebebeb"/><rect x="132.45" y="392.64" width="9.55" height="15.06" rx="2.4" fill="#ebebeb"/><rect x="142.00" y="392.64" width="56.60" height="15.06" rx="2.4" fill="#ebebeb"/><rect x="198.60" y="392.64" width="427.90" height="15.06" rx="2.4" fill="#ebebeb"/><rect x="634.35" y="392.64" width="14.20" height="15.06" rx="2.4" fill="#ebebeb"/><rect x="648.55" y="392.64" width="14.25" height="15.06" rx="2.4" fill="#ebebeb"/><rect x="670.20" y="392.64" width="14.20" height="15.06" rx="2.4" fill="#ebebeb"/><rect x="684.40" y="392.64" width="14.05" height="15.06" rx="2.4" fill="#ebebeb"/><rect x="132.45" y="407.70" width="9.55" height="15.06" rx="2.4" fill="#ebebeb"/><rect x="142.00" y="407.70" width="56.60" height="15.06" rx="2.4" fill="#ebebeb"/><rect x="198.60" y="407.70" width="427.90" height="15.06" rx="2.4" fill="#ebebeb"/><rect x="634.35" y="407.70" width="14.20" height="15.06" rx="2.4" fill="#ebebeb"/><rect x="648.55" y="407.70" width="14.25" height="15.06" rx="2.4" fill="#ebebeb"/><rect x="670.20" y="407.70" width="14.20" height="15.06" rx="2.4" fill="#ebebeb"/><rect x="684.40" y="407.70" width="14.05" height="15.06" rx="2.4" fill="#ebebeb"/><rect x="132.45" y="422.75" width="9.55" height="15.06" rx="2.4" fill="#ebebeb"/><rect x="142.00" y="422.75" width="56.60" height="15.06" rx="2.4" fill="#ebebeb"/><rect x="198.60" y="422.75" width="427.90" height="15.06" rx="2.4" fill="#ebebeb"/><rect x="634.35" y="422.75" width="14.20" height="15.06" rx="2.4" fill="#ebebeb"/><rect x="648.55" y="422.75" width="14.25" height="15.06" rx="2.4" fill="#ebebeb"/><rect x="670.20" y="422.75" width="14.20" height="15.06" rx="2.4" fill="#ebebeb"/><rect x="684.40" y="422.75" width="14.05" height="15.06" rx="2.4" fill="#ebebeb"/><rect x="132.45" y="437.81" width="9.55" height="15.06" rx="2.4" fill="#ebebeb"/><rect x="142.00" y="437.81" width="56.60" height="15.06" rx="2.4" fill="#ebebeb"/><rect x="198.60" y="437.81" width="427.90" height="15.06" rx="2.4" fill="#ebebeb"/><rect x="634.35" y="437.81" width="14.20" height="15.06" rx="2.4" fill="#ebebeb"/><rect x="648.55" y="437.81" width="14.25" height="15.06" rx="2.4" fill="#ebebeb"/><rect x="670.20" y="437.81" width="14.20" height="15.06" rx="2.4" fill="#ebebeb"/><rect x="684.40" y="437.81" width="14.05" height="15.06" rx="2.4" fill="#ebebeb"/><rect x="132.45" y="452.87" width="9.55" height="15.06" rx="2.4" fill="#ebebeb"/><rect x="142.00" y="452.87" width="56.60" height="15.06" rx="2.4" fill="#ebebeb"/><rect x="198.60" y="452.87" width="427.90" height="15.06" rx="2.4" fill="#ebebeb"/><rect x="634.35" y="452.87" width="14.20" height="15.06" rx="2.4" fill="#ebebeb"/><rect x="648.55" y="452.87" width="14.25" height="15.06" rx="2.4" fill="#ebebeb"/><rect x="670.20" y="452.87" width="14.20" height="15.06" rx="2.4" fill="#ebebeb"/><rect x="684.40" y="452.87" width="14.05" height="15.06" rx="2.4" fill="#ebebeb"/><rect x="132.45" y="467.93" width="9.55" height="15.06" rx="2.4" fill="#ebebeb"/><rect x="142.00" y="467.93" width="56.60" height="15.06" rx="2.4" fill="#ebebeb"/><rect x="198.60" y="467.93" width="427.90" height="15.06" rx="2.4" fill="#ebebeb"/><rect x="634.35" y="467.93" width="14.20" height="15.06" rx="2.4" fill="#ebebeb"/><rect x="648.55" y="467.93" width="14.25" height="15.06" rx="2.4" fill="#ebebeb"/><rect x="670.20" y="467.93" width="14.20" height="15.06" rx="2.4" fill="#ebebeb"/><rect x="684.40" y="467.93" width="14.05" height="15.06" rx="2.4" fill="#ebebeb"/><rect x="132.45" y="482.98" width="9.55" height="15.06" rx="2.4" fill="#ebebeb"/><rect x="142.00" y="482.98" width="56.60" height="15.06" rx="2.4" fill="#ebebeb"/><rect x="198.60" y="482.98" width="427.90" height="15.06" rx="2.4" fill="#ebebeb"/><rect x="634.35" y="482.98" width="14.20" height="15.06" rx="2.4" fill="#ebebeb"/><rect x="648.55" y="482.98" width="14.25" height="15.06" rx="2.4" fill="#ebebeb"/><rect x="670.20" y="482.98" width="14.20" height="15.06" rx="2.4" fill="#ebebeb"/><rect x="684.40" y="482.98" width="14.05" height="15.06" rx="2.4" fill="#ebebeb"/><rect x="132.45" y="498.04" width="9.55" height="15.06" rx="2.4" fill="#ebebeb"/><rect x="142.00" y="498.04" width="56.60" height="15.06" rx="2.4" fill="#ebebeb"/><rect x="198.60" y="498.04" width="427.90" height="15.06" rx="2.4" fill="#ebebeb"/><rect x="634.35" y="498.04" width="14.20" height="15.06" rx="2.4" fill="#ebebeb"/><rect x="648.55" y="498.04" width="14.25" height="15.06" rx="2.4" fill="#ebebeb"/><rect x="670.20" y="498.04" width="14.20" height="15.06" rx="2.4" fill="#ebebeb"/><rect x="684.40" y="498.04" width="14.05" height="15.06" rx="2.4" fill="#ebebeb"/></g></svg>
<div class="f typ" style="left:141px;top:91px;width:58px;height:16px;letter-spacing:-0.001px">Typ účtu</div>
<div class="f nam" style="left:198px;top:91px;width:429px;height:16px;letter-spacing:-0.583px">CC_TEST</div>
<div class="f typ" style="left:141px;top:106px;width:58px;height:16px;letter-spacing:-0.001px">Typ účtu</div>
<div class="f nam" style="left:198px;top:106px;width:429px;height:16px;letter-spacing:-0.026px">Čerpání-neinvestiční prostředky</div>
<div class="f typ" style="left:141px;top:121px;width:58px;height:16px;letter-spacing:-0.001px">Typ účtu</div>
<div class="f nam" style="left:198px;top:121px;width:429px;height:16px;letter-spacing:-0.560px">ROZPOCET</div>
<div class="f typ" style="left:141px;top:136px;width:58px;height:16px;letter-spacing:-0.001px">Typ účtu</div>
<div class="f nam" style="left:198px;top:136px;width:429px;height:16px;letter-spacing:-0.077px">Rozvaha NO 2002</div>
<div class="f n" style="left:634px;top:136px;width:15px;height:16px">01</div>
<div class="f n n2" style="left:648px;top:136px;width:15px;height:16px">13</div>
<div class="f n" style="left:670px;top:136px;width:15px;height:16px">12</div>
<div class="f n n2" style="left:684px;top:136px;width:15px;height:16px">13</div>
<div class="f typ" style="left:141px;top:151px;width:58px;height:16px;letter-spacing:-0.001px">Typ účtu</div>
<div class="f nam" style="left:198px;top:151px;width:429px;height:16px;letter-spacing:0.009px">ROZVAHA NO 2003</div>
<div class="f typ" style="left:141px;top:166px;width:58px;height:16px;letter-spacing:-0.001px">Typ účtu</div>
<div class="f nam" style="left:198px;top:166px;width:429px;height:16px;letter-spacing:0.053px">ROZVAHA NO 2003 včetně vnitronákladů a vnitrovýnosů</div>
<div class="f typ" style="left:141px;top:181px;width:58px;height:16px;letter-spacing:-0.001px">Typ účtu</div>
<div class="f nam" style="left:198px;top:181px;width:429px;height:16px;letter-spacing:-0.162px">ROZVAHA PŘÍSPĚVKOVÝCH A ROZPOČTOVÝCH ORGANIZACÍ</div>
<div class="f typ" style="left:141px;top:196px;width:58px;height:17px;letter-spacing:-0.001px">Typ účtu</div>
<div class="f nam" style="left:198px;top:196px;width:429px;height:17px;letter-spacing:-0.039px">Rozvaha 2014</div>
<div class="f n" style="left:634px;top:196px;width:15px;height:17px">01</div>
<div class="f n n2" style="left:648px;top:196px;width:15px;height:17px">14</div>
<div class="f typ" style="left:141px;top:212px;width:58px;height:16px;letter-spacing:-0.001px">Typ účtu</div>
<div class="f nam" style="left:198px;top:212px;width:429px;height:16px;letter-spacing:0.000px">Rozvaha 22</div>
<div class="f n" style="left:634px;top:212px;width:15px;height:16px">01</div>
<div class="f n n2" style="left:648px;top:212px;width:15px;height:16px">12</div>
<div class="f n" style="left:670px;top:212px;width:15px;height:16px">08</div>
<div class="f n n2" style="left:684px;top:212px;width:15px;height:16px">12</div>
<div class="f typ" style="left:141px;top:227px;width:58px;height:16px;letter-spacing:-0.011px">Statická</div>
<div class="f nam" style="left:198px;top:227px;width:429px;height:16px;letter-spacing:-0.620px">TEST</div>
<div class="f typ" style="left:141px;top:242px;width:58px;height:16px;letter-spacing:-0.001px">Typ účtu</div>
<div class="f nam" style="left:198px;top:242px;width:429px;height:16px;letter-spacing:0.108px">VÝKAZ NO (Rozvaha)</div>
<div class="f typ" style="left:141px;top:257px;width:58px;height:16px;letter-spacing:-0.001px">Typ účtu</div>
<div class="f nam" style="left:198px;top:257px;width:429px;height:16px;letter-spacing:0.139px">VÝKAZ NO (Výsledovka)</div>
<div class="f typ" style="left:141px;top:272px;width:58px;height:16px;letter-spacing:-0.001px">Typ účtu</div>
<div class="f nam" style="left:198px;top:272px;width:429px;height:16px;letter-spacing:0.076px">VÝKAZ SONO (Rozvaha)</div>
<div class="f typ" style="left:141px;top:287px;width:58px;height:16px;letter-spacing:-0.001px">Typ účtu</div>
<div class="f nam" style="left:198px;top:287px;width:429px;height:16px;letter-spacing:0.108px">VÝKAZ SONO (Výsledovka)</div>
<div class="f typ" style="left:141px;top:302px;width:58px;height:16px;letter-spacing:-0.001px">Typ účtu</div>
<div class="f nam" style="left:198px;top:302px;width:429px;height:16px;letter-spacing:0.043px">VÝKAZ ZISKŮ A ZTRÁT</div>
<div class="f n" style="left:634px;top:302px;width:15px;height:16px">01</div>
<div class="f n n2" style="left:648px;top:302px;width:15px;height:16px">12</div>
<div class="f n" style="left:670px;top:302px;width:15px;height:16px">12</div>
<div class="f n n2" style="left:684px;top:302px;width:15px;height:16px">12</div>
<div class="f typ" style="left:141px;top:317px;width:58px;height:16px;letter-spacing:-0.001px">Typ účtu</div>
<div class="f nam" style="left:198px;top:317px;width:429px;height:16px;letter-spacing:0.122px">Výsledovka</div>
<div class="f n" style="left:634px;top:317px;width:15px;height:16px">01</div>
<div class="f n n2" style="left:648px;top:317px;width:15px;height:16px">12</div>
<div class="f n" style="left:670px;top:317px;width:15px;height:16px">12</div>
<div class="f n n2" style="left:684px;top:317px;width:15px;height:16px">12</div>
<div class="f typ" style="left:141px;top:332px;width:58px;height:16px;letter-spacing:-0.001px">Typ účtu</div>
<div class="f nam" style="left:198px;top:332px;width:429px;height:16px;letter-spacing:-0.049px">VÝSLEDOVKA NO 2003</div>
<div class="f typ" style="left:141px;top:347px;width:58px;height:16px;letter-spacing:-0.001px">Typ účtu</div>
<div class="f nam" style="left:198px;top:347px;width:429px;height:16px;letter-spacing:0.032px">VÝSLEDOVKA NO 2003 včetně vnitronákladů a vnitrovýnosů</div>
<svg class="abs" style="left:134px;top:198px" width="7" height="7" viewBox="0 0 7 7"><path d="M3 1.1 L5.2 4 L0.8 4 Z" fill="#222"/><rect x="0.9" y="4.9" width="4.3" height="1" fill="#222"/></svg>
<!-- scrollbar -->
<div class="abs" style="left:707px;top:98px;width:10.6px;height:408px;background:#d1d1d1"></div>
<svg class="abs" style="left:704px;top:89px" width="17" height="427" viewBox="704 89 17 427">
<path d="M706.6 102.5 V96.3 A4.9 4.9 0 0 1 711.5 91.5 H712.9 A4.9 4.9 0 0 1 717.8 96.3 V102.5 Z" fill="#d8dbe1" stroke="#93a6c5" stroke-width="1"/>
<path d="M712.3 96 L715.3 99 H709.4 Z" fill="#4c6392"/>
<path d="M706.6 502.3 V508.2 A4.9 4.9 0 0 0 711.5 513 H712.9 A4.9 4.9 0 0 0 717.8 508.2 V502.3 Z" fill="#d8dbe1" stroke="#93a6c5" stroke-width="1"/>
<path d="M712.35 508.5 L715.3 505.4 H709.4 Z" fill="#4c6392"/>
</svg>
<!-- button -->
<div class="abs" style="left:200px;top:525px;width:70px;height:14px;border:1px solid #8fa3c3;border-radius:3px;background:#e5e5e5;font-size:8.5px;line-height:12.4px;text-align:center;color:#111;letter-spacing:0.06px;padding-right:1.5px">Smazat definici</div>
<!-- DIALOG -->
<div id="dlg"><div id="dlgt"></div>
<div class="abs" style="left:1.6px;top:2.2px;font-size:9.8px;line-height:12px;color:#e4e9f0;letter-spacing:-0.05px">Forms</div>
<div class="abs" style="left:80.3px;top:41.7px;font-size:9.5px;line-height:12px;color:#eef1f5;white-space:nowrap">Záznam byl zrušen.</div>
</div>
<svg class="abs" style="left:340px;top:218px" width="175" height="124" viewBox="340 218 175 124">
<defs><pattern id="dots" x="377.6" y="222.3" width="6.4" height="6.3" patternUnits="userSpaceOnUse">
<rect x="0.8" y="0.9" width="1.4" height="1.4" fill="#060c1c"/><rect x="0" y="0.1" width="1.5" height="1.45" fill="#b4c3de"/>
<rect x="4" y="4" width="1.4" height="1.4" fill="#060c1c"/><rect x="3.2" y="3.2" width="1.5" height="1.45" fill="#b4c3de"/>
</pattern></defs>
<rect x="377.6" y="222.3" width="118.6" height="8.4" fill="url(#dots)"/>
<path d="M501.4 222.8 L508.2 229.6 M508.2 222.8 L501.4 229.6" stroke="#f2f4f8" stroke-width="1.3" fill="none"/>
<path d="M369.6 266 L388.6 260.4 L394.3 277.6 L375.9 284.3 Z" fill="#15181c"/>
<path d="M369.2 265.4 L388.1 259.8 L393.5 276.9 L375.3 283.4 Z" fill="#ffffd2"/>
<circle cx="378.2" cy="262" r="1.5" fill="#9a9a9a"/><circle cx="377.8" cy="261.5" r="0.7" fill="#e2e2e2"/><path d="M378.6 263 L379.4 264.6" stroke="#222" stroke-width="1"/>
<rect x="461.6" y="310.5" width="42.7" height="20.7" rx="8" fill="#d5d5d5" stroke="#1b2840" stroke-width="1.1"/>
<path d="M463 322 V318.5 A6.6 6.6 0 0 1 469.6 311.9 H496" stroke="#fbfbfb" stroke-width="1" fill="none"/>
<path d="M469.1 313.2 H497.1 M469.1 328.2 H497.1" stroke="#4a4a4a" stroke-width="1" stroke-dasharray="1.5 0.7"/>
<text x="476.6" y="324.7" font-family="Liberation Sans" font-size="10.3" fill="#151515" textLength="13.4" lengthAdjust="spacingAndGlyphs">OK</text>
<rect x="477" y="325.4" width="6.6" height="0.8" fill="#151515"/>
</svg>
<!-- STATUS -->
<div class="abs" style="left:0;top:40px;width:1px;height:505px;background:#e9e9e9"></div>
<div class="abs" style="left:798px;top:43px;width:1px;height:502px;background:#f4f4f4"></div>
<div class="abs" style="left:799px;top:43px;width:1px;height:503px;background:#111"></div>
<div class="abs" style="left:1px;top:544px;width:798px;height:1px;background:#f2f2f2"></div>
<div class="abs" style="left:0;top:545px;width:800px;height:1px;background:#111"></div>
<div id="status"></div>
<div class="abs" style="left:8px;top:561px;width:784px;height:1px;background:#2c3b57"></div>
<div class="vs" style="left:111px"></div><div class="vs" style="left:133px"></div><div class="vs" style="left:195px"></div><div class="vs" style="left:276px"></div><div class="vs" style="left:320px"></div>
<div class="vs" style="left:785px;top:548px;height:13px"></div>
<div class="st" style="left:8px;top:548px">Typ definice výkazu / závěrkové sestavy: Typ účtu</div>
<div class="st" style="left:8px;top:562.6px">Záznam: 0/18</div>
<div class="st" style="left:183px;top:562.6px">...</div>
<div class="st" style="left:326.8px;top:562.6px;font-size:9.15px">&lt;OSC&gt;</div>
</div>
</body></html>
